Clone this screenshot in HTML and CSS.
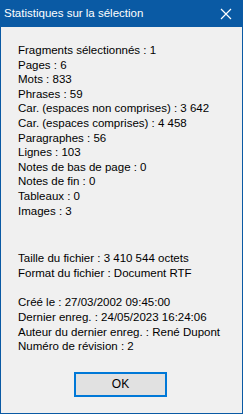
FILE: index.html
```html
<!DOCTYPE html>
<html lang="fr">
<head>
    <meta charset="UTF-8">
    <meta name="viewport" content="width=device-width, initial-scale=1.0">
    <title>Statistiques sur la sélection</title>
    <link rel="stylesheet" href="styles.css">
</head>
<body>
    <div class="window">
        <div class="titlebar">
            <span class="title">Statistiques sur la sélection</span>
            <span class="close">
                <svg width="12" height="12" viewBox="0 0 12 12">
                    <path d="M1 1 L11 11 M11 1 L1 11" stroke="#fff" stroke-width="1.2" fill="none"/>
                </svg>
            </span>
        </div>
        <div class="content">
            <div class="group">
                <p>Fragments sélectionnés : 1</p>
                <p>Pages : 6</p>
                <p>Mots : 833</p>
                <p>Phrases : 59</p>
                <p>Car. (espaces non comprises) : 3 642</p>
                <p>Car. (espaces comprises) : 4 458</p>
                <p>Paragraphes : 56</p>
                <p>Lignes : 103</p>
                <p>Notes de bas de page : 0</p>
                <p>Notes de fin : 0</p>
                <p>Tableaux : 0</p>
                <p>Images : 3</p>
            </div>
            <div class="group file">
                <p>Taille du fichier : 3 410 544 octets</p>
                <p>Format du fichier : Document RTF</p>
            </div>
            <div class="group dates">
                <p>Créé le : 27/03/2002 09:45:00</p>
                <p>Dernier enreg. : 24/05/2023 16:24:06</p>
                <p>Auteur du dernier enreg. : René Dupont</p>
                <p>Numéro de révision : 2</p>
            </div>
            <div class="actions">
                <button class="ok">OK</button>
            </div>
        </div>
    </div>
</body>
</html>
```

FILE: styles.css
```css
body {
    margin: 0;
    font-family: "Liberation Sans", Arial, sans-serif;
    font-size: 11.5px;
    color: #000;
    background: #f0f0f0;
}
.window {
    box-sizing: border-box;
    width: 243px;
    height: 414px;
    border: 1px solid #0a5aa4;
    border-top: none;
    background: #f0f0f0;
}
.titlebar {
    display: flex;
    align-items: center;
    justify-content: space-between;
    height: 27px;
    background: #0a5aa4;
    color: #fff;
    padding: 0 10px 0 3px;
}
.title {
    line-height: 27px;
}
.close {
    display: flex;
    align-items: center;
}
.content {
    padding: 16px 0 0 17px;
}
.group p {
    margin: 0;
    line-height: 14.6px;
    white-space: nowrap;
}
.file {
    margin-top: 33px;
}
.dates {
    margin-top: 15px;
}
.actions {
    display: flex;
    justify-content: center;
    padding-right: 17px;
    margin-top: 18px;
}
.ok {
    box-sizing: border-box;
    width: 93px;
    height: 25px;
    margin-left: -2px;
    border: 2px solid #0078d7;
    background: #e1e1e1;
    font-family: "Liberation Sans", Arial, sans-serif;
    font-size: 12px;
    color: #000;
    padding: 0;
}
```
